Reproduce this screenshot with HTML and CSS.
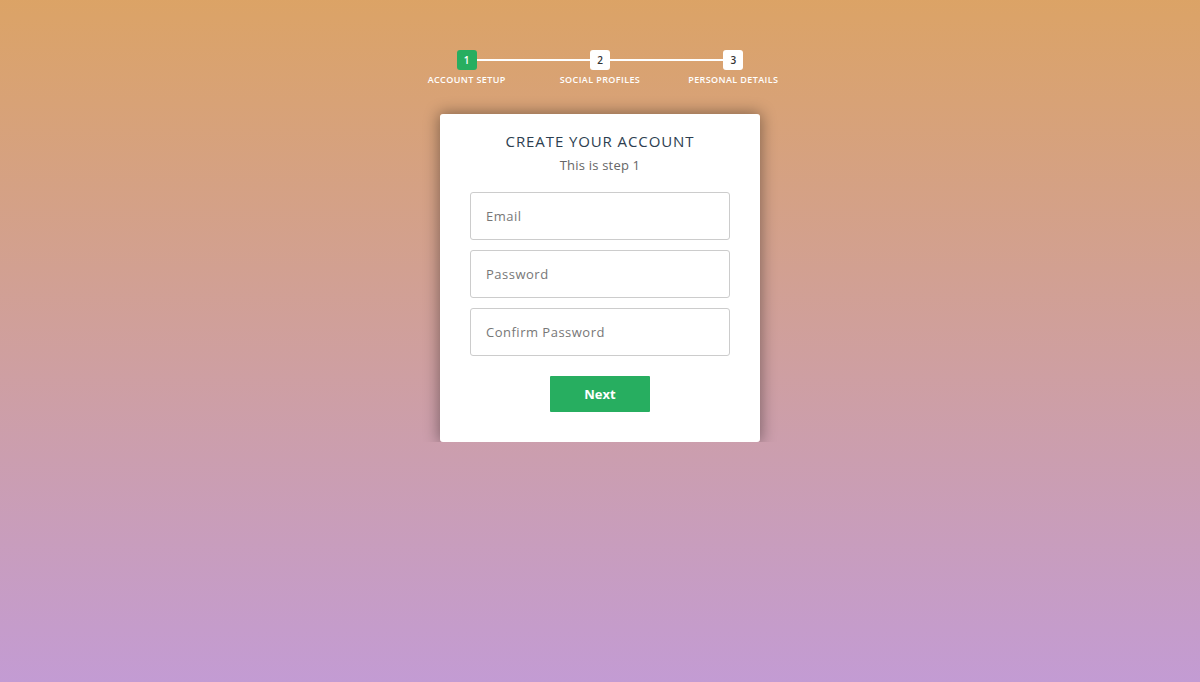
FILE: index.html
```html
<!DOCTYPE html>
<html lang="en">
<head>
  <meta charset="UTF-8">
  <meta name="viewport" content="width=device-width, initial-scale=1.0">
  <title>Multi Step Form</title>
  <link rel="stylesheet" href="styles.css">
</head>
<body>
  <form class="msform">
    <!-- 진행 단계 표시 -->
    <ul class="progressbar">
      <li class="active">Account Setup</li>
      <li>Social Profiles</li>
      <li>Personal Details</li>
    </ul>

    <!-- 첫 번째 단계 -->
    <fieldset class="step">
      <h2 class="fs-title">Create your account</h2>
      <h3 class="fs-subtitle">This is step 1</h3>
      <input type="text" name="email" placeholder="Email">
      <input type="password" name="pass" placeholder="Password">
      <input type="password" name="cpass" placeholder="Confirm Password">
      <button type="button" class="action-button">Next</button>
    </fieldset>
  </form>
</body>
</html>
```

FILE: styles.css
```css
html {
  height: 100%;
  background: linear-gradient(rgba(196, 102, 0, 0.6), rgba(155, 89, 182, 0.6)), #fff;
}

body {
  margin: 0;
  font-family: "Open Sans", Arial, sans-serif;
}

.msform {
  width: 400px;
  margin: 50px auto 0;
  text-align: center;
}

/* 진행 단계 */
.progressbar {
  margin: 0 0 29px;
  padding: 0;
  display: flex;
  counter-reset: step;
}

.progressbar li {
  list-style: none;
  flex: 1;
  color: white;
  text-transform: uppercase;
  font-size: 9px;
  font-weight: 600;
  letter-spacing: 0.4px;
  line-height: 11px;
  position: relative;
}

.progressbar li:before {
  content: counter(step);
  counter-increment: step;
  position: relative;
  z-index: 1;
  width: 20px;
  line-height: 20px;
  display: block;
  font-size: 10px;
  letter-spacing: 0;
  color: #333;
  background: white;
  border-radius: 3px;
  margin: 0 auto 4px;
}

/* 단계 사이 연결선 */
.progressbar li:after {
  content: '';
  width: 100%;
  height: 2px;
  background: white;
  position: absolute;
  left: -50%;
  top: 9px;
  z-index: 0;
}

.progressbar li:first-child:after {
  content: none;
}

.progressbar li.active:before {
  background: #27ae60;
  color: white;
}

/* 카드 */
.step {
  width: 320px;
  box-sizing: border-box;
  margin: 0 auto;
  padding: 18px 30px 20px;
  background: white;
  border: 0;
  border-radius: 3px;
  box-shadow: 0 0 15px 1px rgba(0, 0, 0, 0.4);
}

.fs-title {
  font-size: 15px;
  line-height: 18px;
  font-weight: normal;
  letter-spacing: 0.9px;
  text-transform: uppercase;
  color: #2c3e50;
  margin: 0 0 7px;
}

.fs-subtitle {
  font-size: 13px;
  line-height: 16px;
  font-weight: normal;
  letter-spacing: 0.2px;
  color: #666;
  margin: 0 0 19px;
}

.step input {
  display: block;
  width: 100%;
  box-sizing: border-box;
  padding: 15px;
  border: 1px solid #ccc;
  border-radius: 3px;
  margin: 0 0 10px;
  font-family: inherit;
  font-size: 13px;
  line-height: 16px;
  letter-spacing: 0.5px;
  color: #2c3e50;
}

.step input::placeholder {
  color: #777;
}

.action-button {
  width: 100px;
  height: 36px;
  margin: 10px 5px;
  background: #27ae60;
  color: white;
  font-family: inherit;
  font-size: 13px;
  font-weight: bold;
  border: 0;
  border-radius: 1px;
  cursor: pointer;
}
```
